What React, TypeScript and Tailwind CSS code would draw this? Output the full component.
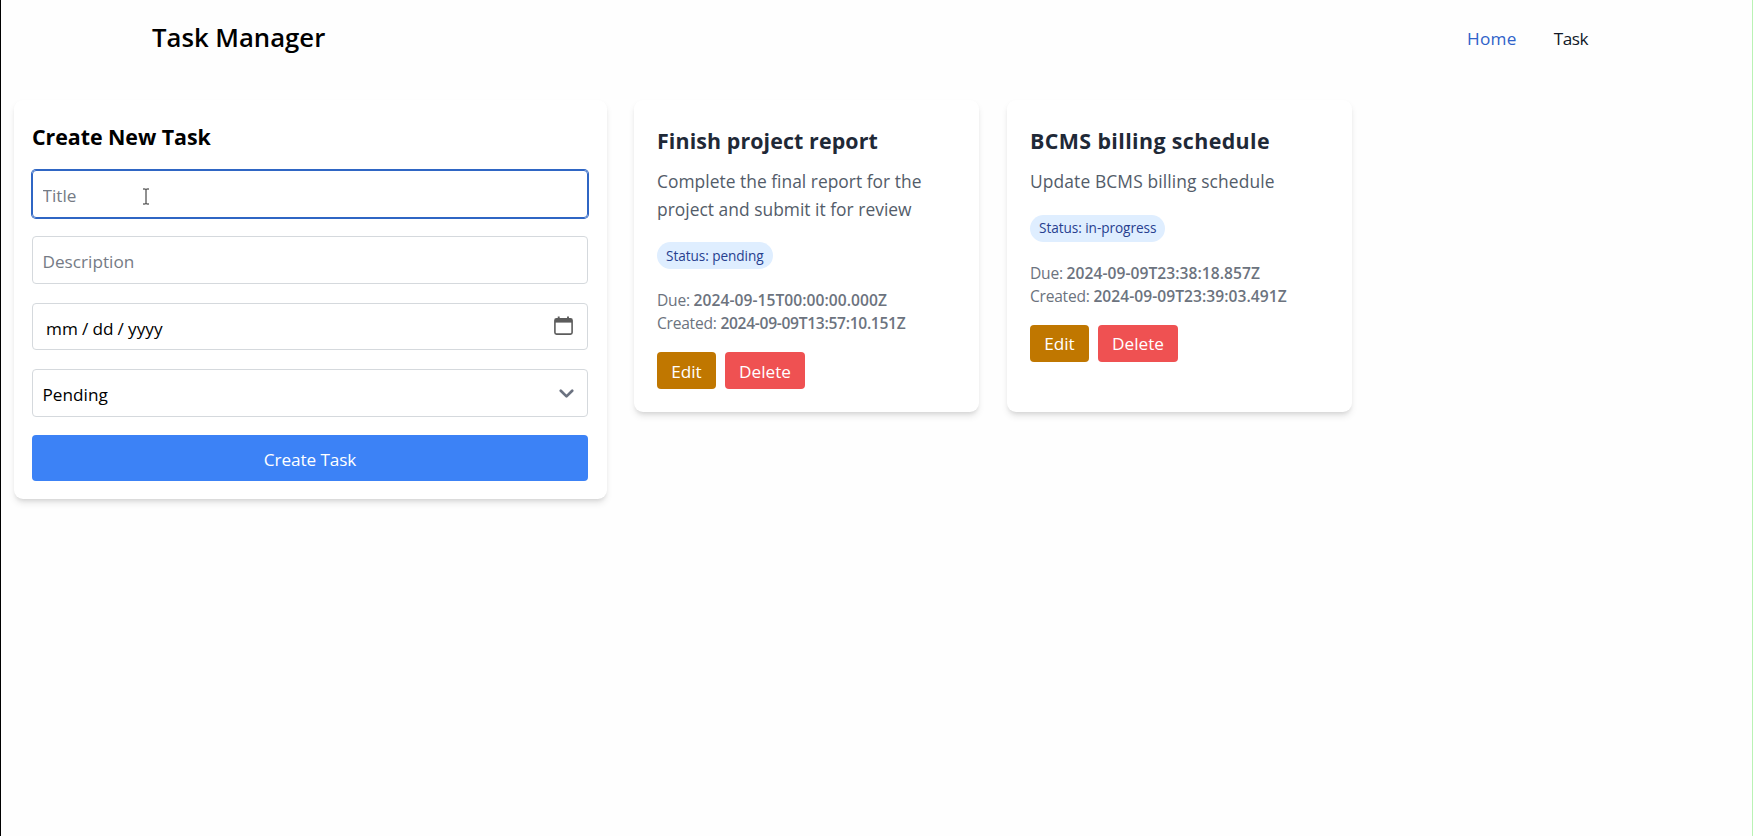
import React from "react";

type Task = {
  title: string;
  titleClass: string;
  description: string;
  descriptionClass: string;
  status: string;
  due: string;
  created: string;
  createdClass: string;
};

const tasks: Task[] = [
  {
    title: "Finish project report",
    titleClass: "tracking-[0.1px]",
    description: "Complete the final report for the project and submit it for review",
    descriptionClass: "tracking-[0.02px]",
    status: "pending",
    due: "2024-09-15T00:00:00.000Z",
    created: "2024-09-09T13:57:10.151Z",
    createdClass: "tracking-[-0.3px]",
  },
  {
    title: "BCMS billing schedule",
    titleClass: "tracking-[0.38px]",
    description: "Update BCMS billing schedule",
    descriptionClass: "tracking-[0.12px]",
    status: "in-progress",
    due: "2024-09-09T23:38:18.857Z",
    created: "2024-09-09T23:39:03.491Z",
    createdClass: "tracking-[0.05px]",
  },
];

function Header() {
  return (
    <header className="flex h-[77px] items-center justify-between pr-[164px] pl-[151px]">
      <h1 className="pb-[2px] text-[25.7px] leading-9 font-semibold text-black">Task Manager</h1>
      <nav className="flex gap-[37px] text-[17.2px] leading-7">
        <a className="tracking-[0.3px] text-[#2f62c9]">Home</a>
        <a className="tracking-[-0.5px] text-[#111827]">Task</a>
      </nav>
    </header>
  );
}

function CalendarIcon() {
  return (
    <svg className="mb-[2px] h-[19px] w-[19px]" viewBox="0 0 19 19" fill="none">
      <rect x="0.9" y="2.9" width="17.2" height="15.2" rx="1.6" stroke="#5c5c5c" strokeWidth="1.6" />
      <path d="M1 3h17v3.6H1z" fill="#5c5c5c" />
      <path d="M4.7 0.4v3M14 0.4v3" stroke="#5c5c5c" strokeWidth="1.9" />
    </svg>
  );
}

function TaskForm() {
  return (
    <form className="h-[399px] w-[593px] rounded-[9px] bg-white pt-[21px] pr-[19px] pl-[18px] shadow-[0_4.6px_7px_-1px_rgba(0,0,0,0.1),0_2.3px_4.6px_-2px_rgba(0,0,0,0.1)]">
      <h2 className="text-[21.4px] leading-8 font-bold tracking-[-0.05px] text-black">Create New Task</h2>
      <div className="mt-[17px] flex flex-col gap-[18.5px]">
        <div className="relative">
          <input
            className="block h-[47.8px] w-full rounded-[4px] border border-[#2f66c4] px-[9.5px] pt-[3px] text-[17.2px] ring-1 ring-[#2f66c4] outline-none placeholder:text-[#757b85]"
            placeholder="Title"
          />
          <svg className="absolute top-[18px] left-[110px] h-[17px] w-[8px]" viewBox="0 0 8 17" fill="none">
            <path d="M1 1h2.2L4 1.6 4.8 1H7M4 1.5v14M1 16h2.2l.8-.6.8.6H7" stroke="#222" strokeWidth="1" />
          </svg>
        </div>
        <input
          className="block h-[47.8px] w-full rounded-[4px] border border-[#d5d9dd] px-[9.5px] pt-[3px] text-[17.2px] outline-none placeholder:text-[#757b85]"
          placeholder="Description"
        />
        <div className="flex h-[47.8px] items-center justify-between rounded-[4px] border border-[#d5d9dd] pr-[14px] pl-[13px] text-[17.2px] text-black">
          <span className="flex gap-1 pt-[4px] tracking-[0.08px]">
            <span>mm</span>
            <span>/</span>
            <span>dd</span>
            <span>/</span>
            <span>yyyy</span>
          </span>
          <CalendarIcon />
        </div>
        <div className="flex h-[47.8px] items-center justify-between rounded-[4px] border border-[#d5d9dd] pr-[13px] pl-[9.5px] text-[17.2px] text-black">
          <span className="pt-[4px]">Pending</span>
          <svg className="mt-[2px] h-[10px] w-[15px]" viewBox="0 0 15 10" fill="none">
            <path d="M1.8 1.8L7.5 7.4l5.7-5.6" stroke="#6b7280" strokeWidth="2.7" strokeLinecap="round" strokeLinejoin="round" />
          </svg>
        </div>
        <button type="button" className="h-[46px] w-full rounded-[4px] bg-[#3c82f6] pt-[3px] text-[17.2px] tracking-[-0.1px] text-white">
          Create Task
        </button>
      </div>
    </form>
  );
}

function TaskCard({ task }: { task: Task }) {
  return (
    <article className="h-[312px] w-[345px] rounded-[9px] bg-white px-[23px] pt-[25px] shadow-[0_4.6px_7px_-1px_rgba(0,0,0,0.1),0_2.3px_4.6px_-2px_rgba(0,0,0,0.1)]">
      <h3 className={`text-[21.4px] leading-8 font-bold text-[#1f2937] ${task.titleClass}`}>{task.title}</h3>
      <p className={`mt-[11px] mb-[19px] text-[17.4px] leading-[27.6px] text-[#535c69] ${task.descriptionClass}`}>
        {task.description}
      </p>
      <span className="flex h-[27px] w-fit items-center rounded-full bg-[#dfeeff] px-[9px] pt-[1px] text-[13.6px] font-medium tracking-[-0.05px] text-[#27408f]">
        Status: {task.status}
      </span>
      <div className="mt-[20px] text-[15.6px] leading-[23px] text-[#6c737e]">
        <p>
          <span className="tracking-[-0.25px]">Due: </span>
          <span className="font-semibold tracking-[0.05px]">{task.due}</span>
        </p>
        <p>
          <span className="tracking-[-0.25px]">Created: </span>
          <span className={`font-semibold ${task.createdClass}`}>{task.created}</span>
        </p>
      </div>
      <div className="mt-[17px] flex gap-[9px] text-[17.2px] text-white">
        <button type="button" className="h-[37px] w-[59px] rounded-[4px] bg-[#c07700] pt-[2px]">
          Edit
        </button>
        <button type="button" className="h-[37px] w-[80px] rounded-[4px] bg-[#ef5152] pt-[2px]">
          Delete
        </button>
      </div>
    </article>
  );
}

export default function App() {
  return (
    <div className="h-[836px] overflow-hidden border-r border-l border-r-[#b9f3b4] border-l-black bg-[#fefefe] font-['Open_Sans','Noto_Sans',sans-serif]">
      <Header />
      <main className="mt-[23px] flex items-start pl-[13px]">
        <TaskForm />
        <section className="ml-[27px] flex gap-[28px]">
          {tasks.map((task) => (
            <TaskCard key={task.title} task={task} />
          ))}
        </section>
      </main>
    </div>
  );
}
